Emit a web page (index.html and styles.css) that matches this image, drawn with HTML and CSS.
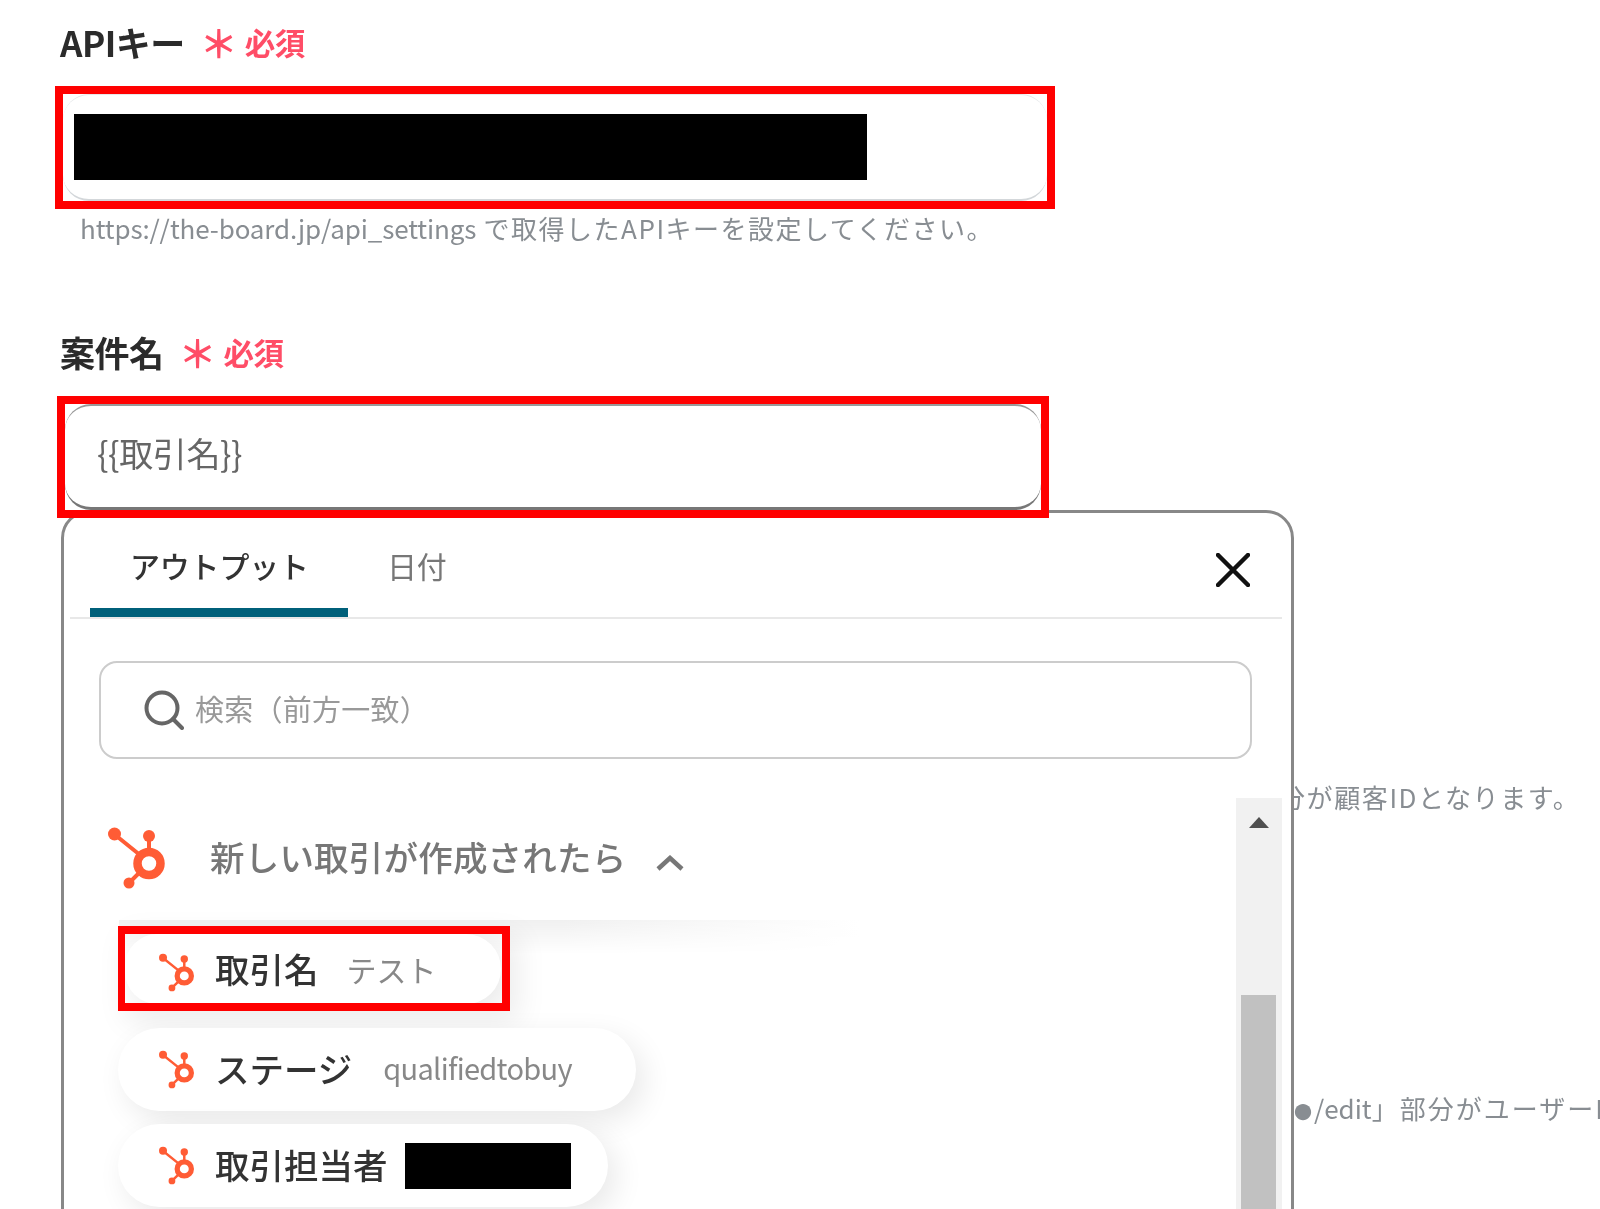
FILE: index.html
```html
<!DOCTYPE html>
<html lang="ja">
<head>
<meta charset="utf-8">
<title>案件名の設定</title>
<link rel="stylesheet" href="styles.css">
</head>
<body>
<svg class="defs" aria-hidden="true">
  <symbol id="hs" viewBox="0 0 60 62">
    <circle cx="41" cy="36.500" r="11.5" fill="none" stroke="currentColor" stroke-width="8.5"/>
    <path d="M41 9V26M6 7L32 28M21 56L33 44" fill="none" stroke="currentColor" stroke-width="4"/>
    <circle cx="41" cy="9" r="6" fill="currentColor"/>
    <circle cx="6.500" cy="7" r="6.500" fill="currentColor"/>
    <circle cx="21" cy="56" r="5.500" fill="currentColor"/>
  </symbol>
</svg>
<main class="form">
  <section class="field first">
    <div class="label"><span>APIキー</span><span class="req"><span class="star">＊</span>必須</span></div>
    <div class="mark mark-api"><div class="input input-api"><div class="redact redact-key"></div></div></div>
    <p class="help help-api"><span class="url">https://the-board.jp/api_settings</span> で取得したAPIキーを設定してください。</p>
  </section>
  <section class="field second">
    <div class="label"><span>案件名</span><span class="req"><span class="star">＊</span>必須</span></div>
    <div class="mark mark-name"><div class="input input-name"><span class="soft">{{取引名}}</span></div></div>
  </section>
  <p class="help help-customer">「●●」部分が顧客IDとなります。</p>
  <p class="help help-user"><span class="dots">「●●</span><span class="url">/edit</span>」部分がユーザーID</p>
</main>

<aside class="panel">
  <div class="tabs">
    <div class="tab active"><span class="soft">アウトプット</span></div>
    <div class="tab"><span class="soft">日付</span></div>
    <svg class="close" viewBox="0 0 34 34" aria-label="閉じる"><path d="M2 2L32 32M32 2L2 32"/></svg>
  </div>
  <div class="search">
    <svg class="search-icon" viewBox="0 0 40 40"><circle cx="18" cy="18" r="15.500"/><path d="M29 29L38 38"/></svg>
    <span class="placeholder soft">検索（前方一致）</span>
  </div>
  <div class="results">
    <div class="list">
      <div class="group-head">
        <svg class="hs-big"><use href="#hs"/></svg>
        <span class="group-title soft">新しい取引が作成されたら</span>
        <svg class="chevron" viewBox="0 0 28 16"><path d="M2 14L14 3L26 14"/></svg>
      </div>
      <div class="fade"></div>
      <div class="pills">
        <div class="pill-mark"><div class="pill"><svg class="hs-small"><use href="#hs"/></svg><span class="name soft">取引名</span><span class="value soft">テスト</span></div></div>
        <div class="pill pill-stage"><svg class="hs-small"><use href="#hs"/></svg><span class="name soft">ステージ</span><span class="value value-latin soft">qualifiedtobuy</span></div>
        <div class="pill pill-owner"><svg class="hs-small"><use href="#hs"/></svg><span class="name soft">取引担当者</span><span class="redact redact-owner"></span></div>
      </div>
    </div>
    <div class="scrollbar">
      <svg class="arrow" viewBox="0 0 20 11"><path d="M10 0L20 11H0Z"/></svg>
      <div class="thumb"></div>
    </div>
  </div>
</aside>
</body>
</html>
```
FILE: styles.css
```css
* { box-sizing: border-box; }
html, body { margin: 0; height: 1209px; overflow: hidden; background: #fff; }
body {
  position: relative;
  font-family: "Noto Sans CJK JP", "Noto Sans", sans-serif;
  color: #333;
}
.defs { display: none; }
.soft { filter: blur(.45px); }
.form { padding: 18px 0 0 56px; width: 1600px; }
.label {
  display: flex;
  align-items: center;
  height: 48px;
  margin-left: 4px;
  font-size: 35px;
  font-weight: 700;
  line-height: 48px;
  color: #2b2b2b;
  letter-spacing: -.5px;
  filter: blur(.45px);
}
.req {
  display: flex;
  align-items: center;
  margin-left: 15px;
  font-size: 30.500px;
  color: #ff4d67;
}
.star { font-size: 38px; margin-right: 13px; width: 32px; text-align: center; font-weight: 700; line-height: 48px; }
.mark { position: relative; z-index: 2; border: 8px solid #f00; }
.mark-api { width: 1000px; height: 123px; margin: 20px 0 0 -1px; }
.mark-name { width: 992px; height: 122px; margin: 20px 0 0 1px; }
.input {
  width: 100%;
  height: 100%;
  border-radius: 26px;
  display: flex;
  align-items: center;
}
.input-api { border: solid #d3d7da; border-width: 1px 0 2px; border-top-color: #e6e8ea; padding-left: 11px; }
.input-name {
  border: solid #999;
  border-width: 2px 0 3px;
  border-bottom-color: #777;
  padding: 0 0 8px 32px;
  font-size: 34px;
  color: #666;
  letter-spacing: -.4px;
}
.redact { background: #000; display: block; flex: none; }
.redact-key { width: 793px; height: 66px; }
.help {
  margin: 0;
  font-size: 26px;
  line-height: 36px;
  color: #888d92;
  white-space: nowrap;
  filter: blur(.45px);
}
.help-api { margin: 1px 0 0 24px; letter-spacing: 1.5px; }
.help-api .url { letter-spacing: -.13px; }
.second { margin-top: 82px; }
.help-customer { margin: 261px 0 0 1085px; letter-spacing: 1.6px; }
.help-user { margin: 275px 0 0 1198px; letter-spacing: 2px; }
.help-user .url { letter-spacing: 0; }
.help-user .dots { font-size: 18px; }

.panel {
  position: absolute;
  z-index: 1;
  left: 61px;
  top: 510px;
  width: 1233px;
  height: 760px;
  padding: 0 9px 0 6px;
  background: #fff;
  border: 3px solid #888;
  border-radius: 28px;
}
.tabs {
  display: flex;
  align-items: flex-start;
  height: 106px;
  padding-left: 20px;
  border-bottom: 2px solid #e8e8e8;
  position: relative;
}
.tab {
  height: 104px;
  padding: 30px 41px 0 39px;
  font-size: 30px;
  line-height: 44px;
  color: #777;
  letter-spacing: -.2px;
}
.tab.active {
  width: 258px;
  color: #333;
  font-weight: 500;
  border-bottom: 9px solid #00607a;
  border-radius: 6px 6px 0 0;
  padding-left: 40px;
  padding-right: 0;
  white-space: nowrap;
}
.close {
  position: absolute;
  right: 32px;
  top: 40px;
  width: 34px;
  height: 34px;
  fill: none;
  stroke: #111;
  stroke-width: 4.500;
  stroke-linecap: round;
}
.search {
  display: flex;
  align-items: center;
  height: 98px;
  margin: 42px 30px 0 29px;
  padding-left: 43px;
  border: 2px solid #ccc;
  border-radius: 18px;
  font-size: 29px;
  letter-spacing: .25px;
  color: #999;
}
.placeholder { margin-bottom: 4px; }
.search-icon {
  width: 40px;
  height: 40px;
  margin-right: 11px;
  fill: none;
  stroke: #666;
  stroke-width: 4;
  stroke-linecap: round;
}
.results { display: flex; margin-top: 39px; }
.list { flex: 1; }
.group-head {
  display: flex;
  align-items: center;
  height: 60px;
  margin: 30px 0 0 38px;
}
.hs-big { width: 60px; height: 62px; color: #ff5c35; flex: none; }
.group-title {
  margin: 0 0 4px 42px;
  font-size: 34.500px;
  font-weight: 500;
  color: #777;
  letter-spacing: .2px;
}
.chevron {
  width: 28px;
  height: 16px;
  margin: 10px 0 0 30px;
  fill: none;
  stroke: #777;
  stroke-width: 4.500;
}
.fade {
  height: 34px;
  margin: 32px 0 -34px 49px;
  width: 740px;
  background: linear-gradient(90deg, #f0f0f0 60%, #fff);
  -webkit-mask-image: linear-gradient(#000, transparent);
  mask-image: linear-gradient(#000, transparent);
}
.pills {
  display: flex;
  flex-direction: column;
  align-items: flex-start;
  margin: 6px 0 0 48px;
  position: relative;
}
.pill {
  display: flex;
  align-items: center;
  height: 83px;
  padding: 0 42px 0 41px;
  background: #fff;
  border-radius: 42px;
  box-shadow: 8px 10px 30px rgba(0, 0, 0, .09);
}
.pill-mark {
  width: 392px;
  height: 85px;
  border: 8px solid #f00;
  border-left-width: 7px;
  overflow: hidden;
  box-shadow: 8px 10px 30px rgba(0, 0, 0, .08);
}
.pill-mark .pill { width: 376px; height: 70px; padding-left: 34px; border-radius: 35px 38px 38px 35px; }
.pill-mark .hs-small { margin-top: 6px; }
.pill-stage { width: 518px; margin-top: 17px; }
.pill-owner { width: 490px; margin-top: 13px; padding-right: 0; }
.hs-small { width: 37px; height: 39px; color: #ff5c35; flex: none; }
.name { margin: 0 0 4px 19px; font-size: 34.500px; font-weight: 500; color: #333; white-space: nowrap; }
.pill-mark .name { margin-bottom: 2px; }
.value { margin-left: 28px; font-size: 30px; color: #888; white-space: nowrap; }
.value-latin { margin: 0 0 6px 31px; font-size: 29px; letter-spacing: -.7px; }
.redact-owner { width: 166px; height: 46px; margin-left: 17px; }
.scrollbar {
  width: 46px;
  height: 500px;
  padding: 19px 6px 0 5px;
  background: #f1f1f1;
  flex: none;
}
.arrow { display: block; width: 20px; height: 11px; margin: 0 auto; fill: #505050; }
.thumb { height: 300px; margin-top: 167px; background: #c1c1c1; }
```
